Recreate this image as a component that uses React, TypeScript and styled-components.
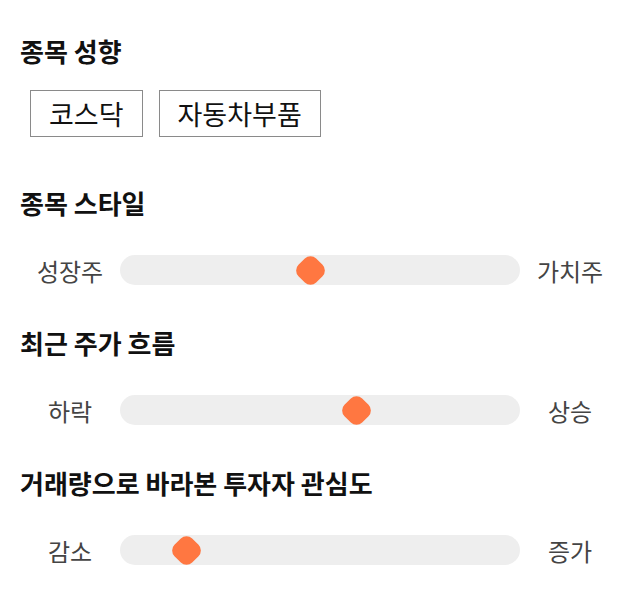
import styled, { createGlobalStyle } from 'styled-components';

const GlobalStyle = createGlobalStyle`
  html, body {
    margin: 0;
    padding: 0;
    background: #ffffff;
  }
  body {
    font-family: "Noto Sans CJK KR", "Noto Sans", sans-serif;
    color: #111111;
  }
`;

const Page = styled.div`
  padding: 35px 20px 0;
`;

const Section = styled.section<{ $gap: number }>`
  margin-bottom: ${(p) => p.$gap}px;
`;

const Title = styled.h2`
  margin: 0;
  font-size: 26px;
  line-height: 32px;
  font-weight: 700;
  color: #111111;
`;

const ChipRow = styled.div`
  display: flex;
  gap: 16px;
  margin-top: 23px;
  padding-left: 10px;
`;

const Chip = styled.div`
  box-sizing: border-box;
  height: 47px;
  padding: 0 18px;
  display: flex;
  align-items: center;
  border: 1px solid #8a8a8a;
  font-size: 27px;
  color: #111111;
`;

const SliderRow = styled.div`
  display: grid;
  grid-template-columns: 100px 1fr 100px;
  align-items: center;
  height: 40px;
  margin-top: 31px;
`;

const SideLabel = styled.span`
  text-align: center;
  font-size: 24px;
  color: #444444;
`;

const Track = styled.div`
  position: relative;
  height: 30px;
  border-radius: 15px;
  background: #eeeeee;
`;

const Thumb = styled.div`
  position: absolute;
  top: 50%;
  width: 25px;
  height: 25px;
  margin-left: -12.5px;
  margin-top: -12.5px;
  border-radius: 8px;
  background: #ff7741;
  transform: rotate(45deg);
`;

const tags = ['코스닥', '자동차부품'];

const sliders = [
  { title: '종목 스타일', left: '성장주', right: '가치주', value: 0.474 },
  { title: '최근 주가 흐름', left: '하락', right: '상승', value: 0.598 },
  { title: '거래량으로 바라본 투자자 관심도', left: '감소', right: '증가', value: 0.14 },
];

export default function App() {
  return (
    <>
      <GlobalStyle />
      <Page>
        <Section $gap={50}>
          <Title>종목 성향</Title>
          <ChipRow>
            {tags.map((t) => (
              <Chip key={t}>{t}</Chip>
            ))}
          </ChipRow>
        </Section>
        {sliders.map((s) => (
          <Section key={s.title} $gap={37}>
            <Title>{s.title}</Title>
            <SliderRow>
              <SideLabel>{s.left}</SideLabel>
              <Track>
                <Thumb style={{ left: `calc(14.5px + (100% - 29px) * ${s.value})` }} />
              </Track>
              <SideLabel>{s.right}</SideLabel>
            </SliderRow>
          </Section>
        ))}
      </Page>
    </>
  );
}
